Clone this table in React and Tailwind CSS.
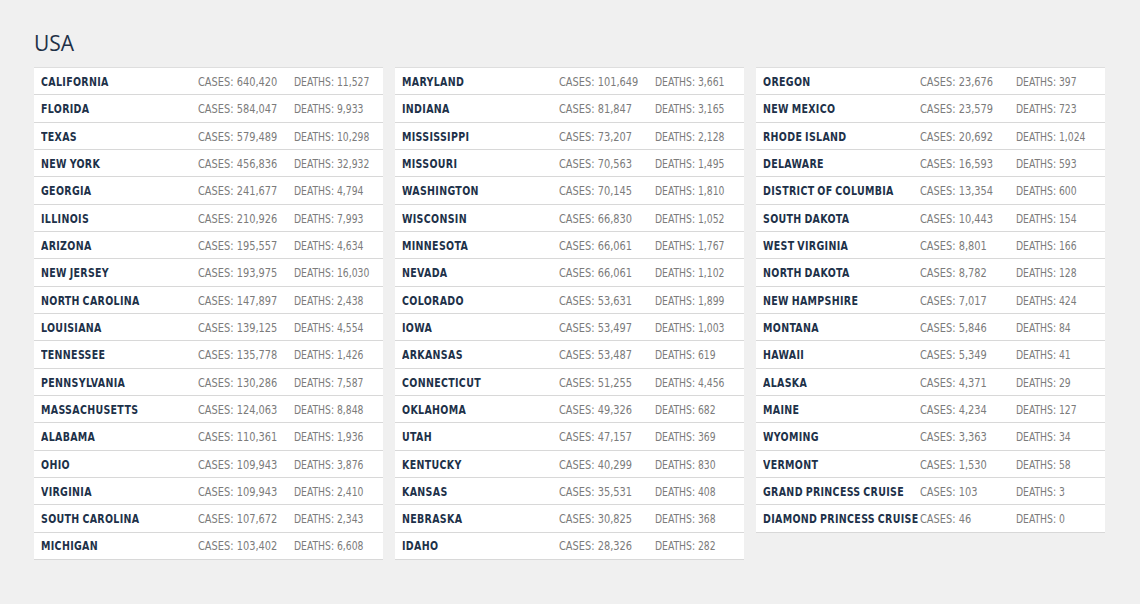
import React from "react";

const cols = [
  [
    ["CALIFORNIA", "640,420", "11,527"],
    ["FLORIDA", "584,047", "9,933"],
    ["TEXAS", "579,489", "10,298"],
    ["NEW YORK", "456,836", "32,932"],
    ["GEORGIA", "241,677", "4,794"],
    ["ILLINOIS", "210,926", "7,993"],
    ["ARIZONA", "195,557", "4,634"],
    ["NEW JERSEY", "193,975", "16,030"],
    ["NORTH CAROLINA", "147,897", "2,438"],
    ["LOUISIANA", "139,125", "4,554"],
    ["TENNESSEE", "135,778", "1,426"],
    ["PENNSYLVANIA", "130,286", "7,587"],
    ["MASSACHUSETTS", "124,063", "8,848"],
    ["ALABAMA", "110,361", "1,936"],
    ["OHIO", "109,943", "3,876"],
    ["VIRGINIA", "109,943", "2,410"],
    ["SOUTH CAROLINA", "107,672", "2,343"],
    ["MICHIGAN", "103,402", "6,608"],
  ],
  [
    ["MARYLAND", "101,649", "3,661"],
    ["INDIANA", "81,847", "3,165"],
    ["MISSISSIPPI", "73,207", "2,128"],
    ["MISSOURI", "70,563", "1,495"],
    ["WASHINGTON", "70,145", "1,810"],
    ["WISCONSIN", "66,830", "1,052"],
    ["MINNESOTA", "66,061", "1,767"],
    ["NEVADA", "66,061", "1,102"],
    ["COLORADO", "53,631", "1,899"],
    ["IOWA", "53,497", "1,003"],
    ["ARKANSAS", "53,487", "619"],
    ["CONNECTICUT", "51,255", "4,456"],
    ["OKLAHOMA", "49,326", "682"],
    ["UTAH", "47,157", "369"],
    ["KENTUCKY", "40,299", "830"],
    ["KANSAS", "35,531", "408"],
    ["NEBRASKA", "30,825", "368"],
    ["IDAHO", "28,326", "282"],
  ],
  [
    ["OREGON", "23,676", "397"],
    ["NEW MEXICO", "23,579", "723"],
    ["RHODE ISLAND", "20,692", "1,024"],
    ["DELAWARE", "16,593", "593"],
    ["DISTRICT OF COLUMBIA", "13,354", "600"],
    ["SOUTH DAKOTA", "10,443", "154"],
    ["WEST VIRGINIA", "8,801", "166"],
    ["NORTH DAKOTA", "8,782", "128"],
    ["NEW HAMPSHIRE", "7,017", "424"],
    ["MONTANA", "5,846", "84"],
    ["HAWAII", "5,349", "41"],
    ["ALASKA", "4,371", "29"],
    ["MAINE", "4,234", "127"],
    ["WYOMING", "3,363", "34"],
    ["VERMONT", "1,530", "58"],
    ["GRAND PRINCESS CRUISE", "103", "3"],
    ["DIAMOND PRINCESS CRUISE", "46", "0"],
  ],
];

const cond = { fontFamily: '"DejaVu Sans Condensed", "Roboto", sans-serif' };

export default function App() {
  return (
    <div className="w-[1140px] h-[604px] bg-[#f0f0f0] pl-[34px] pt-[30px]" >
      <h1 className="text-[21px] leading-[26px] font-normal text-[#1f3047]" style={{ fontFamily: '"Open Sans", "Lato", sans-serif' }}>USA</h1>
      <div className="mt-[11px] flex gap-[12px] items-start">
        {cols.map((col, ci) => (
          <div key={ci} className="w-[349px] shrink-0 border-t border-[#dedede] bg-white">
            {col.map(([n, c, d]) => (
              <div key={n} className="h-[27.33px] flex items-center border-b border-[#d8d8d8] text-[13px] pt-[1px] overflow-hidden" style={cond}>
                <div className="w-[157px] shrink-0 ml-[7px] whitespace-nowrap">
                  <span className="inline-block origin-left scale-x-[0.81] font-bold text-[#1d3149] tracking-[0.4px] [word-spacing:-1px]">{n}</span>
                </div>
                <div className="w-[96px] shrink-0 whitespace-nowrap">
                  <span className="inline-block origin-left scale-x-[0.84] text-[#7b7b7b]">CASES: {c}</span>
                </div>
                <div className="shrink-0 whitespace-nowrap">
                  <span className="inline-block origin-left scale-x-[0.79] text-[#7b7b7b]">DEATHS: {d}</span>
                </div>
              </div>
            ))}
          </div>
        ))}
      </div>
    </div>
  );
}
